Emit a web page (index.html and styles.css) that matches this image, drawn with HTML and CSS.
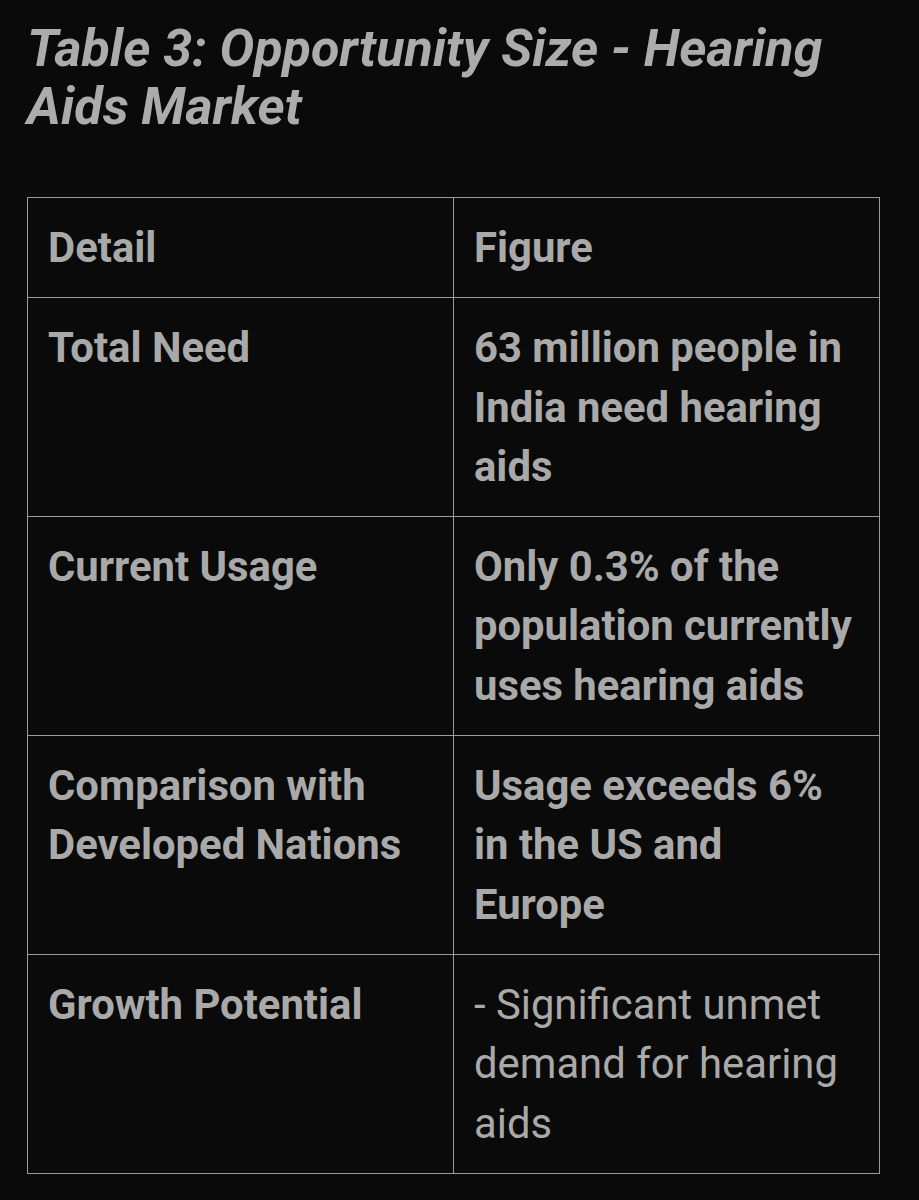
FILE: index.html
```html
<!DOCTYPE html>
<html>
<head>
<meta charset="utf-8">
<link rel="stylesheet" href="styles.css">
</head>
<body>
<main class="page">
  <h3 class="title">Table 3: Opportunity Size - Hearing Aids Market</h3>
  <table class="data">
    <tr><td class="strong">Detail</td><td class="strong">Figure</td></tr>
    <tr><td class="strong">Total Need</td><td class="strong">63 million people in India need hearing aids</td></tr>
    <tr><td class="strong">Current Usage</td><td class="strong">Only 0.3% of the population currently uses hearing aids</td></tr>
    <tr><td class="strong">Comparison with Developed Nations</td><td class="strong">Usage exceeds 6% in the US and Europe</td></tr>
    <tr><td class="strong">Growth Potential</td><td class="plain">- Significant unmet demand for hearing aids</td></tr>
  </table>
</main>
</body>
</html>
```
FILE: styles.css
```css
html, body {
  margin: 0;
  padding: 0;
  background: #0a0a0a;
}
.page {
  padding: 20px 39px 0 27px;
  font-family: Roboto, "Noto Sans", sans-serif;
  color: #aaaaaa;
}
.title {
  margin: 0 0 61px 0;
  font-size: 52px;
  line-height: 58px;
  font-weight: 700;
  font-style: italic;
  color: #acacac;
}
.data {
  width: 853px;
  border-collapse: collapse;
  table-layout: fixed;
}
.data td {
  border: 1px solid #9a9a9a;
  padding: 20px 18px 20px 20px;
  vertical-align: top;
  font-size: 41.8px;
  line-height: 59.3px;
  color: #a9a9a9;
}
.data td.strong { font-weight: 700; }
.data td.plain { font-weight: 400; }
```
